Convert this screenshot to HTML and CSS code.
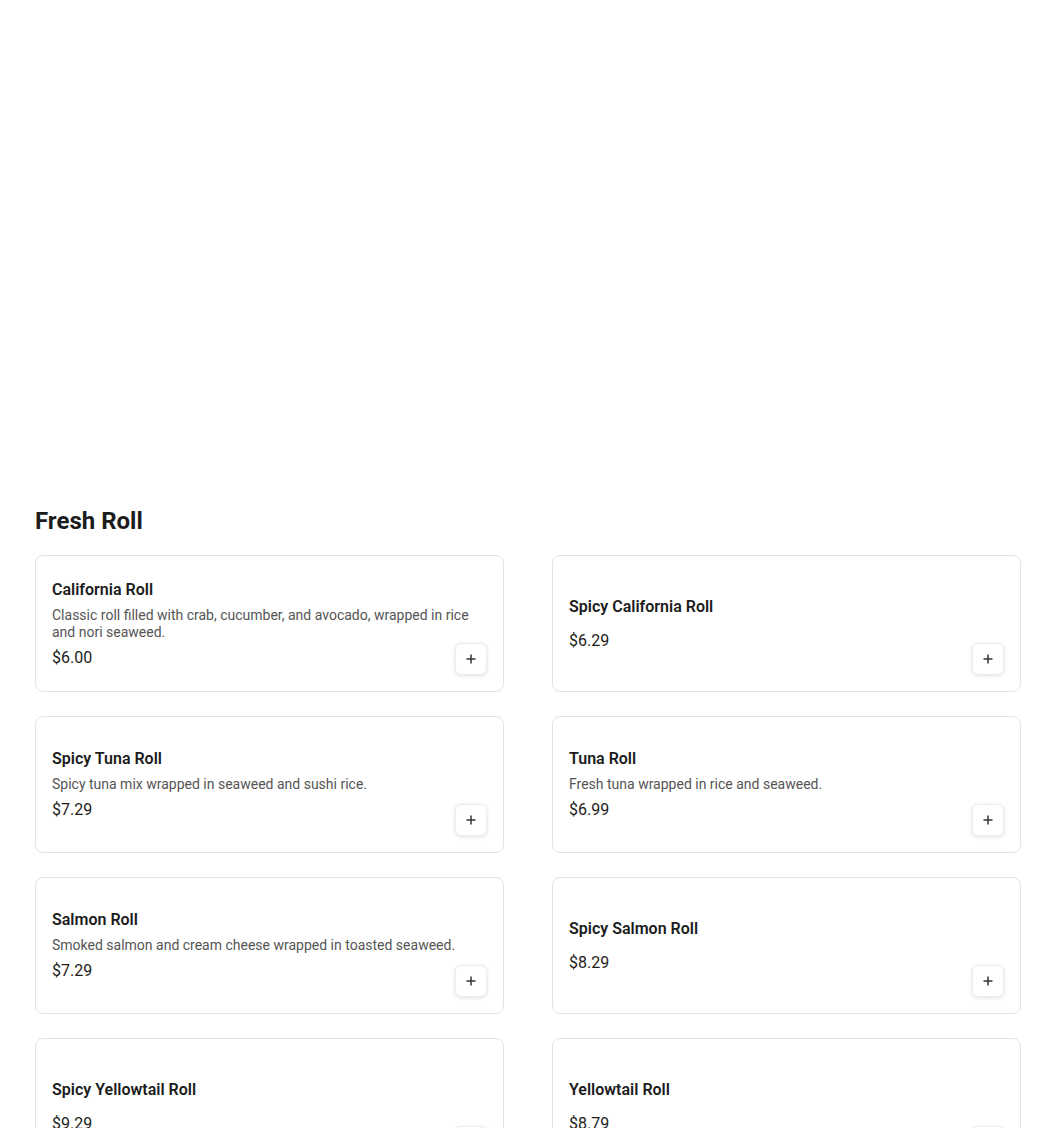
FILE: index.html
```html
<!DOCTYPE html>
<html lang="en">
<head>
<meta charset="utf-8">
<title>Fresh Roll</title>
<link rel="stylesheet" href="styles.css">
</head>
<body>
<div class="hero"></div>
<section class="section">
  <h2 class="section-title">Fresh Roll</h2>
  <div class="grid">
    <div class="card">
      <div class="info">
        <h3 class="name">California Roll</h3>
        <p class="desc">Classic roll filled with crab, cucumber, and avocado, wrapped in rice and nori seaweed.</p>
        <div class="price">$6.00</div>
      </div>
      <button class="add" aria-label="Add"><svg width="12" height="12" viewBox="0 0 12 12"><path d="M6 1.5v9M1.5 6h9" stroke="#333" stroke-width="1.5" fill="none"/></svg></button>
    </div>
    <div class="card">
      <div class="info">
        <h3 class="name">Spicy California Roll</h3>
        <p class="desc"></p>
        <div class="price">$6.29</div>
      </div>
      <button class="add" aria-label="Add"><svg width="12" height="12" viewBox="0 0 12 12"><path d="M6 1.5v9M1.5 6h9" stroke="#333" stroke-width="1.5" fill="none"/></svg></button>
    </div>
    <div class="card">
      <div class="info">
        <h3 class="name">Spicy Tuna Roll</h3>
        <p class="desc">Spicy tuna mix wrapped in seaweed and sushi rice.</p>
        <div class="price">$7.29</div>
      </div>
      <button class="add" aria-label="Add"><svg width="12" height="12" viewBox="0 0 12 12"><path d="M6 1.5v9M1.5 6h9" stroke="#333" stroke-width="1.5" fill="none"/></svg></button>
    </div>
    <div class="card">
      <div class="info">
        <h3 class="name">Tuna Roll</h3>
        <p class="desc">Fresh tuna wrapped in rice and seaweed.</p>
        <div class="price">$6.99</div>
      </div>
      <button class="add" aria-label="Add"><svg width="12" height="12" viewBox="0 0 12 12"><path d="M6 1.5v9M1.5 6h9" stroke="#333" stroke-width="1.5" fill="none"/></svg></button>
    </div>
    <div class="card">
      <div class="info">
        <h3 class="name">Salmon Roll</h3>
        <p class="desc">Smoked salmon and cream cheese wrapped in toasted seaweed.</p>
        <div class="price">$7.29</div>
      </div>
      <button class="add" aria-label="Add"><svg width="12" height="12" viewBox="0 0 12 12"><path d="M6 1.5v9M1.5 6h9" stroke="#333" stroke-width="1.5" fill="none"/></svg></button>
    </div>
    <div class="card">
      <div class="info">
        <h3 class="name">Spicy Salmon Roll</h3>
        <p class="desc"></p>
        <div class="price">$8.29</div>
      </div>
      <button class="add" aria-label="Add"><svg width="12" height="12" viewBox="0 0 12 12"><path d="M6 1.5v9M1.5 6h9" stroke="#333" stroke-width="1.5" fill="none"/></svg></button>
    </div>
    <div class="card">
      <div class="info">
        <h3 class="name">Spicy Yellowtail Roll</h3>
        <p class="desc"></p>
        <div class="price">$9.29</div>
      </div>
      <button class="add" aria-label="Add"><svg width="12" height="12" viewBox="0 0 12 12"><path d="M6 1.5v9M1.5 6h9" stroke="#333" stroke-width="1.5" fill="none"/></svg></button>
    </div>
    <div class="card">
      <div class="info">
        <h3 class="name">Yellowtail Roll</h3>
        <p class="desc"></p>
        <div class="price">$8.79</div>
      </div>
      <button class="add" aria-label="Add"><svg width="12" height="12" viewBox="0 0 12 12"><path d="M6 1.5v9M1.5 6h9" stroke="#333" stroke-width="1.5" fill="none"/></svg></button>
    </div>
  </div>
</section>
</body>
</html>
```
FILE: styles.css
```css
* { box-sizing: border-box; }
html, body { margin: 0; padding: 0; background: #fff; }
body {
  font-family: Roboto, "Liberation Sans", Arial, sans-serif;
  color: #1c1c1c;
}
.hero { height: 505px; }
.section { padding: 0 29px 0 35px; }
.section-title {
  margin: 0 0 18px;
  font-size: 24px;
  line-height: 32px;
  font-weight: 700;
  color: #1c1c1c;
}
.grid {
  display: grid;
  grid-template-columns: 1fr 1fr;
  column-gap: 48px;
  row-gap: 24px;
}
.card {
  position: relative;
  display: flex;
  align-items: center;
  min-height: 137px;
  padding: 16px;
  border: 1px solid #e3e3e3;
  border-radius: 8px;
  background: #fff;
}
.info {
  flex: 1;
  display: flex;
  flex-direction: column;
  gap: 5px;
}
.name {
  margin: 0;
  font-size: 16px;
  line-height: 24px;
  font-weight: 600;
  color: #1c1c1c;
}
.desc {
  margin: 0;
  font-size: 14px;
  line-height: 17px;
  color: #555;
}
.price {
  font-size: 16px;
  line-height: 24px;
  color: #1c1c1c;
}
.add {
  position: absolute;
  right: 16px;
  bottom: 16px;
  width: 32px;
  height: 32px;
  padding: 0;
  display: flex;
  align-items: center;
  justify-content: center;
  border: 1px solid #ececec;
  border-radius: 6px;
  background: #fff;
  box-shadow: 0 1px 4px rgba(0, 0, 0, 0.12);
  cursor: pointer;
}
```
